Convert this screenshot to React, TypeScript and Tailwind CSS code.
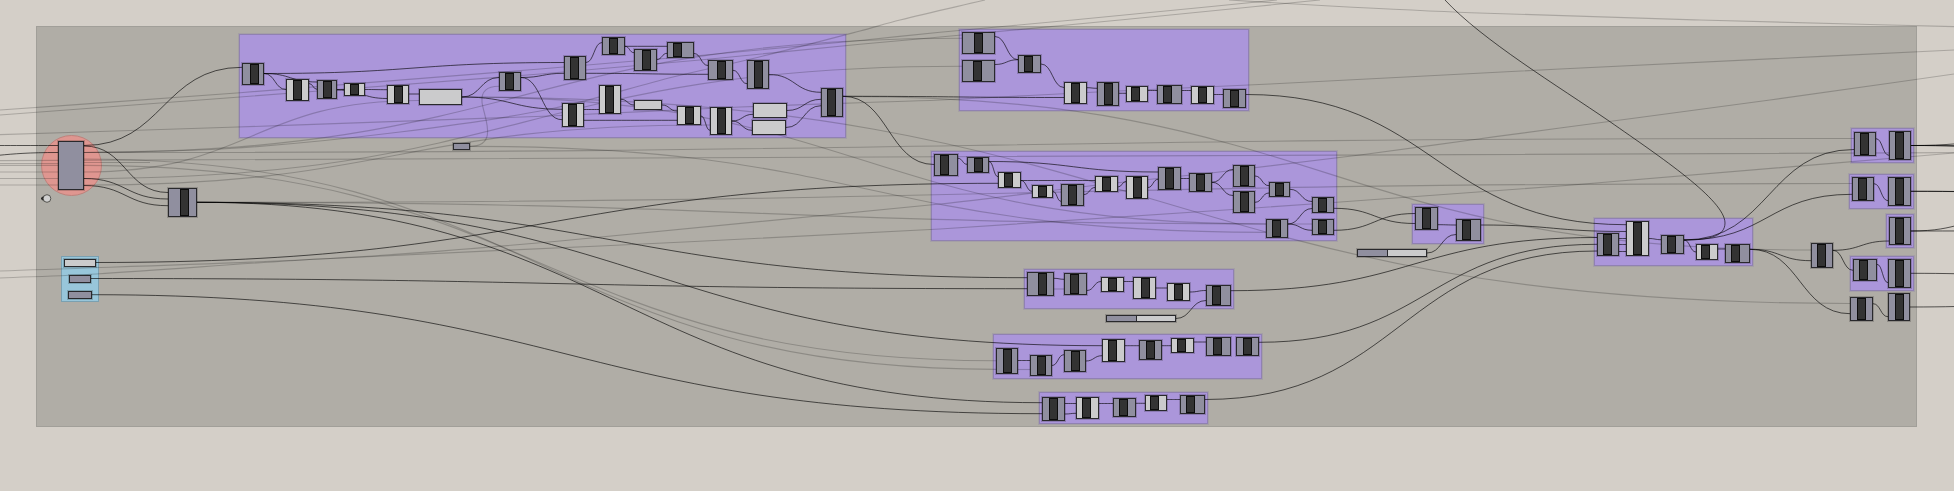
import React from "react";

type Box = [left: number, top: number, right: number, bottom: number];
type Tone = "dark" | "light";
type Component = [...Box, iconCenter: number, tone?: Tone];
type Wire = [x1: number, y1: number, x2: number, y2: number];
type Point = [x: number, y: number];

const groups: Box[] = [
  [239, 34, 846, 138],
  [959, 29, 1249, 111],
  [931, 151, 1337, 241],
  [1024, 269, 1234, 309],
  [993, 334, 1262, 379],
  [1039, 392, 1208, 424],
  [1412, 204, 1484, 244],
  [1594, 218, 1753, 266],
  [1851, 128, 1914, 163],
  [1849, 174, 1914, 209],
  [1886, 214, 1914, 248],
  [1850, 256, 1914, 291],
];

const components: Component[] = [
  [168, 188, 197, 217, 184.5],
  [242, 63, 264, 85, 254],
  [286, 79, 309, 101, 297, "light"],
  [317, 80, 337, 99, 327],
  [344, 83, 365, 96, 354.5, "light"],
  [387, 85, 409, 104, 398, "light"],
  [499, 72, 521, 91, 509.5],
  [564, 56, 586, 80, 574],
  [602, 37, 625, 55, 613.5],
  [634, 49, 657, 71, 646],
  [667, 42, 694, 58, 677.5],
  [708, 60, 733, 80, 721.5],
  [747, 60, 769, 89, 758.5],
  [821, 88, 843, 117, 831.5],
  [562, 103, 584, 127, 572.5, "light"],
  [599, 85, 621, 114, 609.5, "light"],
  [677, 106, 701, 125, 689.5, "light"],
  [710, 107, 732, 135, 721, "light"],
  [962, 32, 995, 54, 978.5],
  [962, 60, 995, 82, 977.5],
  [1018, 55, 1041, 73, 1028.5],
  [1064, 82, 1087, 104, 1075, "light"],
  [1097, 82, 1119, 106, 1108],
  [1126, 86, 1148, 102, 1135.5, "light"],
  [1157, 85, 1182, 104, 1167.5],
  [1191, 86, 1214, 104, 1202, "light"],
  [1223, 89, 1246, 108, 1234.5],
  [934, 154, 958, 176, 944],
  [967, 157, 989, 173, 978],
  [998, 172, 1021, 188, 1008.5, "light"],
  [1032, 185, 1053, 198, 1042.5, "light"],
  [1061, 184, 1084, 206, 1072.5],
  [1095, 176, 1118, 192, 1106, "light"],
  [1126, 176, 1148, 199, 1137.5, "light"],
  [1158, 167, 1181, 190, 1169.5],
  [1189, 173, 1212, 192, 1200.5],
  [1233, 165, 1255, 187, 1244.5],
  [1233, 191, 1255, 213, 1244.5],
  [1269, 182, 1290, 197, 1279.5],
  [1312, 197, 1334, 213, 1322.5],
  [1312, 219, 1334, 235, 1322.5],
  [1266, 219, 1288, 238, 1276.5],
  [1027, 272, 1054, 296, 1042.5],
  [1064, 273, 1087, 295, 1074.5],
  [1101, 277, 1124, 292, 1112, "light"],
  [1133, 277, 1156, 299, 1145, "light"],
  [1167, 283, 1190, 301, 1178, "light"],
  [1206, 285, 1231, 306, 1216.5],
  [996, 348, 1018, 374, 1007],
  [1030, 355, 1052, 376, 1041],
  [1064, 350, 1086, 372, 1075.5],
  [1102, 339, 1125, 362, 1112.5, "light"],
  [1139, 340, 1162, 360, 1150],
  [1171, 338, 1194, 353, 1181, "light"],
  [1206, 337, 1231, 356, 1217],
  [1236, 337, 1259, 356, 1247.5],
  [1042, 397, 1065, 421, 1053],
  [1076, 397, 1099, 419, 1086.5, "light"],
  [1113, 398, 1136, 417, 1123.5],
  [1145, 395, 1167, 411, 1154.5, "light"],
  [1180, 395, 1205, 414, 1190.5],
  [1415, 207, 1438, 230, 1426],
  [1456, 219, 1481, 241, 1466.5],
  [1597, 233, 1619, 256, 1607.5],
  [1626, 221, 1649, 256, 1637, "light"],
  [1661, 235, 1684, 254, 1671.5],
  [1696, 244, 1718, 260, 1705, "light"],
  [1725, 244, 1750, 263, 1735.5],
  [1811, 243, 1833, 268, 1821.5],
  [1854, 132, 1876, 156, 1864.5],
  [1889, 131, 1911, 160, 1899.5],
  [1852, 177, 1874, 201, 1862.5],
  [1888, 177, 1911, 206, 1899.5],
  [1889, 217, 1911, 245, 1899.5],
  [1853, 259, 1877, 281, 1863.5],
  [1888, 259, 1911, 288, 1899.5],
  [1850, 297, 1873, 321, 1861],
  [1888, 293, 1910, 321, 1899],
];

const params: [...Box, Tone][] = [
  [58, 141, 84, 190, "dark"],
  [64, 259, 96, 267, "light"],
  [69, 275, 91, 283, "dark"],
  [68, 291, 92, 299, "dark"],
  [419, 89, 462, 105, "light"],
  [453, 143, 470, 150, "dark"],
  [634, 100, 662, 110, "light"],
  [753, 103, 787, 118, "light"],
  [752, 120, 786, 135, "light"],
];

const sliders: Box[] = [
  [1106, 315, 1176, 322],
  [1357, 249, 1427, 257],
];

const wires: Wire[] = [
  [-60, 145.5, 58, 145.5], [-60, 158, 58, 152.5],
  [84, 145.5, 242, 67.3], [84, 146, 168, 192.5], [84, 178.5, 168, 199], [84, 185.5, 168, 205.7],
  [197, 202.3, 1027, 277.7], [197, 202.3, 1102, 345.7], [197, 202.3, 1042, 402.7],
  [96, 262.5, 998, 183.3], [91, 278.5, 1027, 288.7], [92, 294.7, 1042, 413.7],
  [264, 73.5, 286, 89.5], [264, 73.5, 317, 82], [264, 73.5, 564, 62.5], [309, 83.5, 317, 89.3],
  [337, 89.5, 344, 89.5], [337, 90, 387, 98.5], [365, 89.5, 387, 89.7], [409, 94, 419, 94],
  [462, 97, 499, 77.5], [462, 97, 562, 109.3], [521, 77.5, 562, 119.7], [521, 77.5, 564, 73.3],
  [586, 62.5, 602, 42.5], [625, 46.3, 634, 52.7], [625, 46.3, 667, 46.3], [657, 59.5, 667, 53.3],
  [694, 53.5, 708, 65.5], [586, 73.3, 708, 74.3], [733, 70.3, 747, 83.7], [769, 74.5, 821, 92.3],
  [584, 109.5, 599, 109.5], [584, 120.3, 677, 120.3], [621, 99.3, 634, 105], [662, 105, 677, 111],
  [701, 116, 710, 130.3], [732, 121, 753, 114.3], [732, 121, 752, 130.3], [787, 110.5, 821, 99.3],
  [786, 127.5, 821, 105.7], [843, 96.3, 934, 164.5], [843, 96.3, 1064, 97.5],
  [995, 36.5, 1018, 59.7], [995, 64.5, 1018, 59.7], [1041, 64, 1064, 87.5], [1087, 87.7, 1097, 88.3],
  [1119, 93.3, 1126, 93.3], [1148, 90.5, 1157, 90.5], [1182, 90.5, 1191, 90.5], [1214, 94.5, 1223, 94.5],
  [1246, 94.5, 1626, 224.7],
  [958, 158.3, 967, 164.3], [989, 161.5, 998, 176.7], [989, 161.5, 1158, 172], [1021, 180.5, 1032, 191.3],
  [1021, 180.5, 1095, 180.5], [1053, 191.5, 1061, 201.3], [1084, 194.5, 1095, 187.5], [1118, 187, 1126, 181.5],
  [1148, 187.5, 1158, 179.3], [1181, 178.5, 1189, 178.5], [1212, 182.3, 1233, 169.5], [1212, 182.3, 1233, 195.5],
  [1255, 176, 1269, 185.7], [1255, 202.3, 1269, 193], [1290, 189.3, 1312, 201.5], [1288, 224, 1312, 208.5],
  [1288, 224, 1312, 230.3], [1334, 208.3, 1415, 223.5], [1334, 230.3, 1415, 213.5],
  [1438, 224.7, 1456, 225], [1427, 253, 1456, 234.5], [1481, 225, 1626, 231.5],
  [1231, 290.7, 1597, 237.5], [1259, 342.3, 1597, 244.3], [1205, 399.5, 1597, 251],
  [1054, 278.3, 1064, 279.3], [1087, 290.5, 1101, 281.5], [1124, 281.5, 1133, 281.5], [1156, 288, 1167, 288],
  [1190, 292, 1206, 290.5], [1176, 318.5, 1206, 300.5],
  [1018, 360.5, 1030, 360.5], [1052, 365.5, 1064, 354.7], [1086, 361, 1102, 355.7], [1125, 345.7, 1139, 345.7],
  [1162, 345.7, 1171, 345.7], [1194, 342, 1206, 342],
  [1065, 403.5, 1076, 403.5], [1065, 414, 1076, 413.3], [1099, 403.5, 1113, 403.5], [1136, 403.3, 1145, 403.3],
  [1167, 399.5, 1180, 399.5],
  [1619, 238.5, 1626, 238.5], [1619, 244.5, 1626, 244.5], [1619, 251.5, 1626, 251.5],
  [1649, 238.5, 1661, 239.7], [1684, 240, 1696, 252], [1684, 240, 1854, 149.5], [1684, 240, 1852, 194.3],
  [1718, 249, 1725, 249], [1750, 249.3, 1811, 260.7], [1750, 249.3, 1850, 313.7],
  [1833, 250.3, 1889, 241], [1833, 250.3, 1853, 270.3],
  [1876, 138.7, 1889, 155.3], [1874, 183.7, 1888, 200.7], [1877, 264.3, 1888, 282.7], [1873, 303.7, 1888, 316.7],
  [1911, 145.5, 2060, 135], [1911, 145.5, 2060, 146], [1911, 145.5, 2060, 151],
  [1911, 191.3, 2100, 193], [1911, 191.3, 2100, 194.5], [1911, 231, 2010, 218], [1911, 231, 2100, 230.5],
  [1911, 273.3, 2060, 276], [1910, 307, 2060, 304],
];

const faintWires: Wire[] = [
  [84, 152.5, 962, 38.3], [84, 178.5, 962, 66.3], [84, 172, 419, 100.5], [84, 185, 710, 125],
  [84, 152.5, 1854, 138.5], [-100, 161, 2100, 152], [84, 159, 996, 369.3], [84, 165.3, 996, 360.7],
  [197, 202.3, 1852, 183.5], [197, 202.3, 1312, 224],
  [462, 97, 1850, 303.5], [462, 97, 1266, 224], [843, 96.3, 1811, 250], [470, 146.3, 1266, 232.3],
  [1054, 289, 1064, 289], [1018, 369.5, 1030, 369.5],
  [0, 163.5, 84, 163.5], [0, 165.3, 84, 165.3], [0, 172, 84, 172], [0, 178.5, 84, 178.5], [0, 185, 84, 185],
  [84, 162.5, 150, 162.5],
];

const faintCurves: Point[][] = [
  [[0, 110], [240, 92.7], [540, 69], [700, 55.5], [860, 40.5], [940, 32.3], [1073, 20], [1277, 0]],
  [[0, 115], [240, 97], [540, 74], [700, 60], [860, 44.3], [940, 37], [1120, 20], [1320, 0]],
  [[0, 134.7], [230, 127.3], [550, 116], [740, 107], [860, 102.7], [940, 100], [1097, 92], [1270, 84], [1560, 69], [1954, 50]],
  [[84, 152.5], [230, 148.5], [400, 132], [550, 109], [673, 77], [753, 58.5], [860, 31], [900, 20], [985, 0]],
  [[0, 271], [330, 258.5], [560, 241], [940, 204], [1106, 184], [1213, 172.7], [1360, 155], [1471, 140], [1560, 128], [1770, 100], [1954, 74]],
  [[0, 278], [96, 274], [320, 259], [600, 246], [940, 229], [1330, 202.7], [1560, 186], [1954, 153]],
  [[1229, 0], [1330, 6], [1471, 12.7], [1700, 20], [1954, 26.7]],
];

const wirePath = ([x1, y1, x2, y2]: Wire) => {
  const mid = (x1 + x2) / 2;
  return `M${x1} ${y1}C${mid} ${y1} ${mid} ${y2} ${x2} ${y2}`;
};

const smoothPath = (points: Point[]) =>
  points.slice(1).reduce((path, end, i) => {
    const start = points[i];
    const before = points[i - 1] ?? start;
    const after = points[i + 2] ?? end;
    const k = (end[0] - start[0]) / 3;
    const slopeIn = (end[1] - before[1]) / (end[0] - before[0]);
    const slopeOut = (after[1] - start[1]) / (after[0] - start[0]);
    return `${path}C${start[0] + k} ${start[1] + k * slopeIn} ${end[0] - k} ${end[1] - k * slopeOut} ${end[0]} ${end[1]}`;
  }, `M${points[0][0]} ${points[0][1]}`);

const tones: Record<Tone, string> = {
  dark: "bg-[#908f9f]",
  light: "bg-[#cbcbcc]",
};

const outline = "border border-[#29292c] shadow-[0_0_0_1px_rgba(0,0,0,0.18)]";

/** Puts its children at a box of the free canvas. */
function CanvasItem({ box, className, children }: { box: Box; className: string; children?: React.ReactNode }) {
  const [left, top, right, bottom] = box;
  return (
    <div className={`absolute flex ${className}`} style={{ left, top, width: right - left, height: bottom - top }}>
      {children}
    </div>
  );
}

/** Input ports, the component's icon strip, output ports. */
function ComponentNode({ data }: { data: Component }) {
  const [left, top, right, bottom, icon, tone = "dark"] = data;
  const before = Math.round(icon - left - 5.5);
  const after = right - left - 11 - before;
  return (
    <CanvasItem box={[left, top, right, bottom]} className={`${outline} ${tones[tone]}`}>
      <span className="basis-0" style={{ flexGrow: before }} />
      <span className="w-[9px] shrink-0 border border-[#0c0c0c] bg-[#333333]" />
      <span className="basis-0" style={{ flexGrow: after }} />
    </CanvasItem>
  );
}

function Wires() {
  return (
    <svg className="absolute inset-0" width="1954" height="491" fill="none">
      <g stroke="#000" strokeOpacity="0.2" strokeWidth="1.15">
        {faintWires.map((w, i) => (
          <path key={i} d={wirePath(w)} />
        ))}
        {faintCurves.map((c, i) => (
          <path key={i} d={smoothPath(c)} />
        ))}
        <path d="M470 146.5C500 146 483 115 482 102C481 91 487 86.5 499 86.3" />
      </g>
      <g stroke="#000" strokeOpacity="0.62">
        {wires.map((w, i) => (
          <path key={i} d={wirePath(w)} />
        ))}
        <path d="M1684 240C1710 240 1725 236 1725 223C1725 200 1660 156.7 1610 121.7C1558 86 1482 40 1445 0" />
      </g>
      <path d="M41 198.5L44 196v5z" fill="#222" stroke="#222" />
      <circle cx="47" cy="198.5" r="3.8" fill="#d0d0d0" stroke="#55544f" />
    </svg>
  );
}

export default function App() {
  return (
    <main className="relative flex h-[491px] w-[1954px] overflow-hidden bg-[#d4cfc8] pt-[26px] pr-[37px] pb-16 pl-9">
      <section className="flex-1 border border-[#a19f99] bg-[#b0ada6]" />

      {groups.map((box, i) => (
        <CanvasItem
          key={i}
          box={box}
          className="border border-[#9081b2] bg-[#ab96da] shadow-[0_0_0_1px_rgba(110,90,160,0.15)]"
        />
      ))}
      <CanvasItem box={[61, 256, 99, 302]} className="border border-[#7ba0b0] bg-[#98c6da]" />
      <CanvasItem box={[41, 135, 102, 196]} className="rounded-full border border-[#bd827c] bg-[#df9690]" />

      <Wires />

      {params.map(([l, t, r, b, tone], i) => (
        <CanvasItem key={i} box={[l, t, r, b]} className={`${outline} ${tones[tone]}`} />
      ))}
      {components.map((c, i) => (
        <ComponentNode key={i} data={c} />
      ))}
      {sliders.map((box, i) => (
        <CanvasItem key={i} box={box} className={`${outline} bg-[#cbcbcc]`}>
          <span className="w-[30px] border-r border-[#29292c] bg-[#908f9f]" />
        </CanvasItem>
      ))}
    </main>
  );
}
